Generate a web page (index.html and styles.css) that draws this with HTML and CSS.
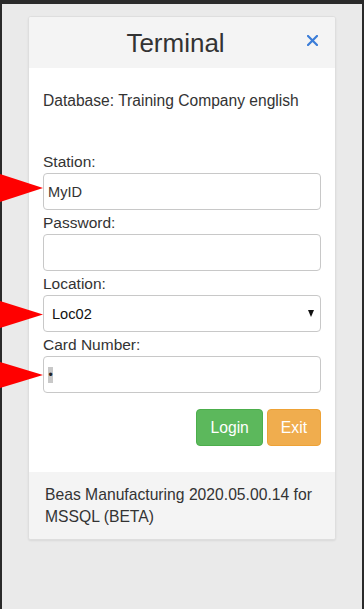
FILE: index.html
```html
<!DOCTYPE html>
<html lang="en">
<head>
  <meta charset="UTF-8" />
  <meta name="viewport" content="width=device-width, initial-scale=1.0"/>
  <title>Terminal</title>
  <link rel="stylesheet" href="styles.css">
</head>
<body>
  <div class="screen">
    <div class="card">
      <!-- Header -->
      <div class="card-header">
        <h1 class="title">Terminal</h1>
        <button class="close-btn" aria-label="Close">
          <svg width="11" height="11" viewBox="0 0 11 11">
            <path d="M1 1 L10 10 M10 1 L1 10" stroke="#3b7dd8" stroke-width="2.2" stroke-linecap="square"/>
          </svg>
        </button>
      </div>

      <!-- Form -->
      <div class="card-body">
        <p class="db-info">Database: Training Company english</p>

        <label class="field-label" for="station">Station:</label>
        <input class="field" id="station" type="text" value="MyID">

        <label class="field-label" for="password">Password:</label>
        <input class="field" id="password" type="password">

        <label class="field-label" for="location">Location:</label>
        <div class="select-wrap">
          <select class="field select" id="location">
            <option>Loc02</option>
          </select>
        </div>

        <label class="field-label">Card Number:</label>
        <div class="field fake-input"><span class="selected">&bull;</span></div>

        <div class="actions">
          <button class="btn btn-login">Login</button>
          <button class="btn btn-exit">Exit</button>
        </div>
      </div>

      <!-- Footer -->
      <div class="card-footer">
        Beas Manufacturing 2020.05.00.14 for MSSQL (BETA)
      </div>
    </div>
  </div>

  <!-- annotation arrows -->
  <svg class="arrows" width="60" height="400" viewBox="0 0 60 400">
    <polygon points="0,174 43,188 0,202" fill="#ff0000"/>
    <polygon points="0,301 43,314.5 0,328" fill="#ff0000"/>
    <polygon points="0,362 43,375 0,388" fill="#ff0000"/>
  </svg>
</body>
</html>
```

FILE: styles.css
```css
body {
  margin: 0;
  background: #2a2a2a;
  font-family: 'Liberation Sans', Arial, sans-serif;
  color: #333;
}

.screen {
  margin: 4px 2px 0 2px;
  min-height: 605px;
  background: #eaeaea;
  padding: 12px 0 0 26px;
  box-sizing: border-box;
}

.card {
  width: 308px;
  box-sizing: border-box;
  background: #fff;
  border: 1px solid #dedede;
  border-radius: 3px;
  box-shadow: 0 1px 2px rgba(0, 0, 0, 0.08);
  overflow: hidden;
}

.card-header {
  display: flex;
  align-items: center;
  height: 51px;
  box-sizing: border-box;
  padding: 11px 17px 10px 15px;
  background: #f4f4f4;
}

.title {
  flex: 1;
  margin: 0;
  font-size: 26px;
  font-weight: normal;
  line-height: 30px;
  text-align: center;
  color: #333;
}

.close-btn {
  border: none;
  background: none;
  padding: 0;
  width: 11px;
  height: 11px;
  margin-bottom: 6px;
  display: flex;
  cursor: pointer;
}

.card-body {
  display: flex;
  flex-direction: column;
  padding: 22px 14px 26px 14px;
}

.db-info {
  margin: 0 0 39px 0;
  font-size: 15.6px;
  line-height: 22px;
}

.field-label {
  font-size: 15.5px;
  line-height: 22px;
  margin-top: 2px;
  color: #333;
}

.db-info + .field-label {
  margin-top: 0;
}

.field {
  height: 37px;
  width: 100%;
  box-sizing: border-box;
  border: 1px solid #c8c8c8;
  border-radius: 4px;
  background: #fff;
  font-family: 'Liberation Sans', Arial, sans-serif;
  font-size: 14.6px;
  color: #333;
  padding: 0 4px;
  margin: 0;
  outline: none;
}

.select-wrap {
  position: relative;
}

.select {
  appearance: none;
  -webkit-appearance: none;
  padding: 0 8px;
  color: #111;
}

.select-wrap::after {
  content: "";
  position: absolute;
  right: 7px;
  top: 15px;
  border-left: 3.5px solid transparent;
  border-right: 3.5px solid transparent;
  border-top: 7px solid #111;
}

.fake-input {
  display: flex;
  align-items: center;
}

.selected {
  background: #c8c8c8;
  color: #222;
  font-size: 12px;
  line-height: 16px;
  width: 5px;
  text-align: center;
  overflow: hidden;
}

.actions {
  display: flex;
  justify-content: flex-end;
  gap: 4px;
  margin-top: 16px;
}

.btn {
  height: 37px;
  padding: 0 13px;
  border-radius: 4px;
  font-family: 'Liberation Sans', Arial, sans-serif;
  font-size: 15.7px;
  color: #fff;
  cursor: pointer;
}

.btn-login {
  background: #5cb85c;
  border: 1px solid #4cae4c;
}

.btn-exit {
  background: #f0ad4e;
  border: 1px solid #eea236;
}

.card-footer {
  background: #f4f4f4;
  padding: 12px 16px 11px 16px;
  font-size: 15.7px;
  line-height: 22px;
  color: #333;
}

.arrows {
  position: absolute;
  left: 0;
  top: 0;
}
```
